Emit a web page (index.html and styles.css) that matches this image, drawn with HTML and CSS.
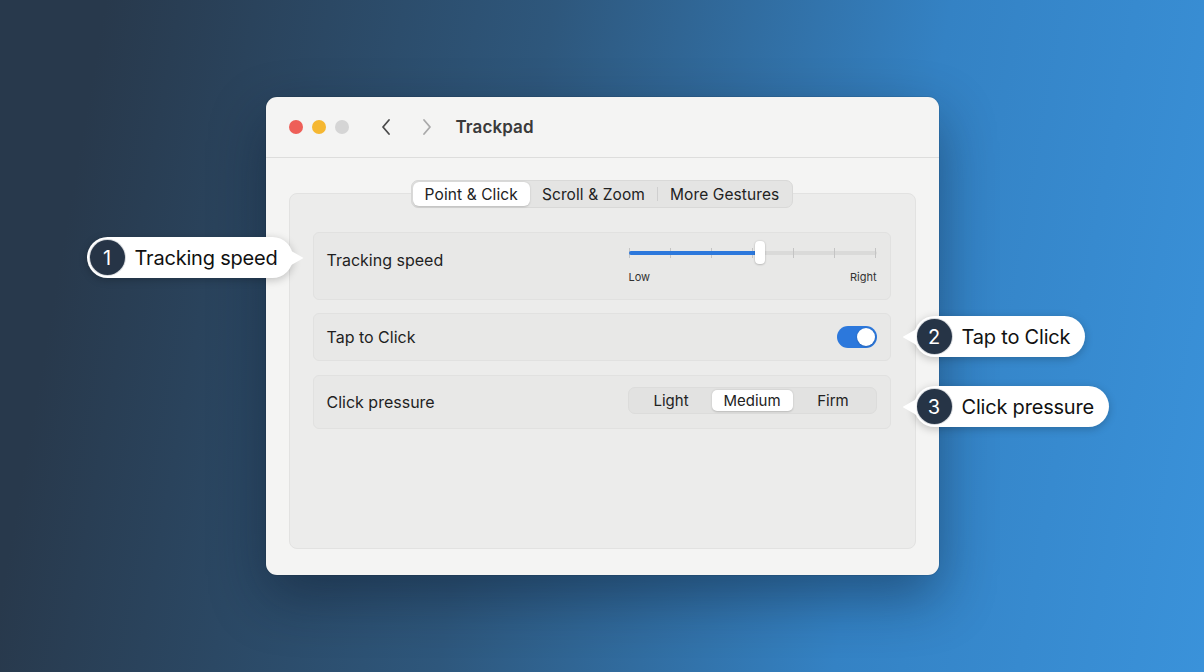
FILE: index.html
```html
<!DOCTYPE html>
<html lang="en">
<head>
    <meta charset="UTF-8">
    <meta name="viewport" content="width=device-width, initial-scale=1.0">
    <title>Trackpad</title>
    <link rel="stylesheet" href="styles.css">
</head>
<body>
    <div class="window">
        <header class="titlebar">
            <div class="lights">
                <span class="light red"></span>
                <span class="light yellow"></span>
                <span class="light gray"></span>
            </div>
            <div class="nav">
                <svg class="chevron back" width="12" height="18" viewBox="0 0 12 18">
                    <path d="M9 2 L3 9 L9 16" fill="none" stroke="currentColor" stroke-width="1.8" stroke-linecap="round" stroke-linejoin="round"/>
                </svg>
                <svg class="chevron forward" width="12" height="18" viewBox="0 0 12 18">
                    <path d="M3 2 L9 9 L3 16" fill="none" stroke="currentColor" stroke-width="1.8" stroke-linecap="round" stroke-linejoin="round"/>
                </svg>
            </div>
            <h1 class="title">Trackpad</h1>
        </header>

        <div class="content">
            <div class="tabs">
                <button class="tab active">Point &amp; Click</button>
                <button class="tab">Scroll &amp; Zoom</button>
                <span class="tab-divider"></span>
                <button class="tab">More Gestures</button>
            </div>

            <div class="panel">
                <div class="row row-speed">
                    <span class="row-label">Tracking speed</span>
                    <div class="slider">
                        <div class="track">
                            <div class="ticks">
                                <i></i><i></i><i></i><i></i><i></i><i></i><i></i>
                            </div>
                            <div class="fill" style="width: 130px;"></div>
                            <div class="thumb" style="left: 126px;"></div>
                        </div>
                        <div class="slider-labels">
                            <span>Low</span>
                            <span>Right</span>
                        </div>
                    </div>
                </div>

                <div class="row row-tap">
                    <span class="row-label">Tap to Click</span>
                    <div class="toggle on"><span class="knob"></span></div>
                </div>

                <div class="row row-pressure">
                    <span class="row-label">Click pressure</span>
                    <div class="segmented">
                        <button class="seg">Light</button>
                        <button class="seg active">Medium</button>
                        <button class="seg">Firm</button>
                    </div>
                </div>
            </div>
        </div>

        <!-- callouts -->
        <div class="callout callout-1 tail-right">
            <span class="badge">1</span>
            <span class="callout-text">Tracking speed</span>
        </div>
        <div class="callout callout-2 tail-left">
            <span class="badge">2</span>
            <span class="callout-text">Tap to Click</span>
        </div>
        <div class="callout callout-3 tail-left">
            <span class="badge">3</span>
            <span class="callout-text">Click pressure</span>
        </div>
    </div>
</body>
</html>
```

FILE: styles.css
```css
* {
    margin: 0;
    padding: 0;
    box-sizing: border-box;
}

body {
    font-family: Inter, 'Noto Sans', 'Liberation Sans', sans-serif;
    background: linear-gradient(100deg, #28394c 8%, #2e577c 42%, #3482c4 72%, #3a92da 100%);
    height: 100vh;
    display: flex;
    align-items: center;
    justify-content: center;
    color: #1d1d1f;
    overflow: hidden;
}

button {
    font-family: inherit;
    border: none;
    background: none;
    color: inherit;
}

.window {
    position: relative;
    width: 673px;
    height: 478px;
    background: #f4f4f3;
    border-radius: 11px;
    box-shadow: 0 22px 55px rgba(10, 20, 35, 0.42), 0 0 0 1px rgba(0, 0, 0, 0.08);
    display: flex;
    flex-direction: column;
}

/* title bar */
.titlebar {
    height: 61px;
    border-bottom: 1px solid #dddddc;
    display: flex;
    align-items: center;
    padding-left: 23px;
}

.lights {
    display: flex;
    gap: 9px;
}

.light {
    width: 14px;
    height: 14px;
    border-radius: 50%;
}

.light.red { background: #ee5f58; }
.light.yellow { background: #f5b731; }
.light.gray { background: #d5d5d5; }

.nav {
    display: flex;
    gap: 29px;
    margin-left: 31px;
}

.chevron.back { color: #4a4a4a; }
.chevron.forward { color: #a9a9a9; }

.title {
    margin-left: 23px;
    font-size: 17px;
    font-weight: 600;
    color: #3a3a3a;
    letter-spacing: 0.1px;
}

/* content */
.content {
    flex: 1;
    display: flex;
    flex-direction: column;
    padding: 22px 23px 26px 23px;
}

.tabs {
    position: relative;
    z-index: 1;
    align-self: center;
    display: flex;
    align-items: center;
    height: 28px;
    padding: 1px;
    margin-bottom: -15px;
    background: #e4e4e3;
    border: 1px solid #d9d9d8;
    border-radius: 7px;
}

.tab {
    height: 100%;
    padding: 0 12px;
    font-size: 15.5px;
    letter-spacing: 0.1px;
    color: #222;
    border-radius: 6px;
}

.tab.active {
    background: #fff;
    box-shadow: 0 0.5px 2px rgba(0, 0, 0, 0.18);
}

.tab-divider {
    width: 1px;
    height: 14px;
    background: #cfcfcf;
}

.panel {
    flex: 1;
    background: #ececeb;
    border: 1px solid #e2e2e1;
    border-radius: 8px;
    padding: 38px 24px 0 23px;
    display: flex;
    flex-direction: column;
    gap: 13px;
}

.row {
    display: flex;
    align-items: center;
    justify-content: space-between;
    padding: 0 13px 0 13px;
    background: #e8e8e7;
    border: 1px solid #e1e1e0;
    border-radius: 6px;
}

.row-speed { height: 68px; }
.row-tap { height: 48px; margin-bottom: 1px; }
.row-pressure { height: 54px; }

.row-label {
    font-size: 16px;
    color: #1f1f1f;
}

.row-speed .row-label {
    margin-bottom: 12px;
}

/* slider */
.slider {
    width: 248px;
    margin-bottom: 6px;
}

.track {
    position: relative;
    height: 4px;
    margin: 9px 0 15px;
    background: #dadad9;
    border-radius: 2px;
}

.ticks {
    position: absolute;
    inset: -3px 0;
    display: flex;
    justify-content: space-between;
}

.ticks i {
    width: 1px;
    height: 10px;
    background: #c4c4c4;
}

.fill {
    position: absolute;
    left: 0;
    top: 0;
    height: 4px;
    background: #2c78dc;
    border-radius: 2px;
}

.thumb {
    position: absolute;
    top: -10px;
    width: 10px;
    height: 23px;
    background: #fff;
    border-radius: 4px;
    box-shadow: 0 0.5px 2px rgba(0, 0, 0, 0.3);
}

.slider-labels {
    display: flex;
    justify-content: space-between;
    font-size: 11px;
    color: #333;
}

/* toggle */
.toggle {
    width: 40px;
    height: 22px;
    border-radius: 11px;
    background: #2c78dc;
    padding: 2px;
    display: flex;
    justify-content: flex-end;
}

.toggle .knob {
    width: 18px;
    height: 18px;
    border-radius: 50%;
    background: #fff;
    box-shadow: 0 0.5px 2px rgba(0, 0, 0, 0.25);
}

/* segmented control */
.segmented {
    display: flex;
    width: 249px;
    height: 27px;
    padding: 2px;
    background: #e2e2e1;
    border: 1px solid #dcdcdb;
    border-radius: 7px;
    margin-top: -4px;
}

.seg {
    flex: 1;
    font-size: 15px;
    color: #222;
    border-radius: 5px;
}

.seg.active {
    background: #fff;
    box-shadow: 0 0.5px 2px rgba(0, 0, 0, 0.18);
}

/* callouts */
.callout {
    position: absolute;
    height: 41px;
    display: flex;
    align-items: center;
    gap: 10px;
    padding: 0 15px 0 3px;
    background: #fff;
    border-radius: 21px;
    box-shadow: 0 2px 8px rgba(0, 0, 0, 0.22);
    white-space: nowrap;
}

.callout::after {
    content: '';
    position: absolute;
    top: 13px;
    width: 14px;
    height: 16px;
    background: #fff;
}

.tail-right::after {
    right: -11px;
    clip-path: polygon(0 0, 100% 50%, 0 100%);
}

.tail-left::after {
    left: -11px;
    clip-path: polygon(100% 0, 0 50%, 100% 100%);
}

.badge {
    flex-shrink: 0;
    width: 35px;
    height: 35px;
    border-radius: 50%;
    background: #263446;
    color: #fff;
    font-size: 20px;
    display: flex;
    align-items: center;
    justify-content: center;
    box-shadow: 0 0 0 1px #d6d9dd;
}

.callout-text {
    font-size: 20px;
    color: #111;
    letter-spacing: -0.2px;
}

.callout-1 { left: -179px; top: 140px; }
.callout-2 { left: 648px; top: 219px; }
.callout-3 { left: 648px; top: 289px; }
```
